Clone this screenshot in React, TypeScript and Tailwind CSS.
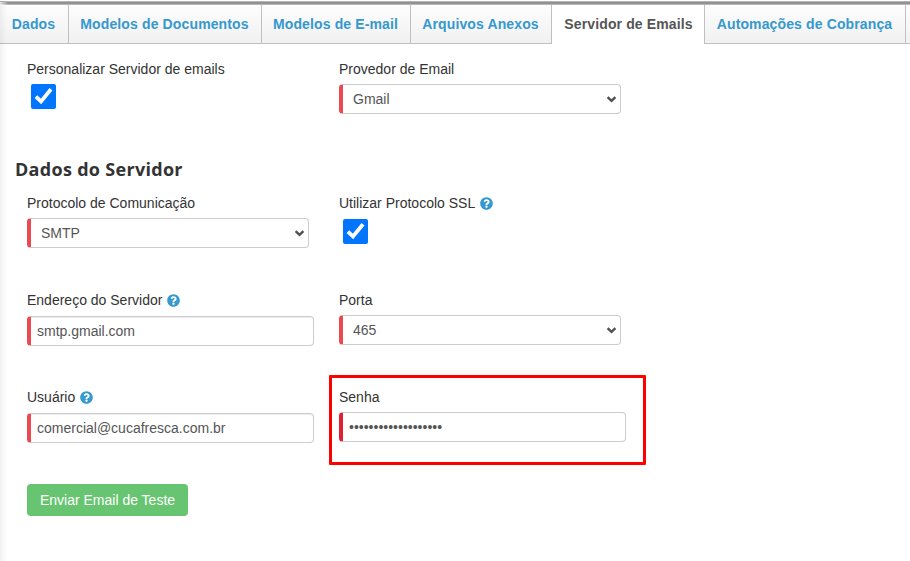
import type { ReactNode } from "react"
import clsx from "clsx"
import { FaQuestionCircle } from "react-icons/fa"

/* ===== Constants ===== */
const tabs = [
  { label: "Dados", width: "w-[69px]" },
  { label: "Modelos de Documentos", width: "w-[193px]" },
  { label: "Modelos de E-mail", width: "w-[149px]" },
  { label: "Arquivos Anexos", width: "w-[141px]" },
  { label: "Servidor de Emails", width: "w-[153px]", active: true },
  { label: "Automações de Cobrança", width: "w-[201px]" },
]

const controlClass =
  "block h-[30px] rounded-[4px] border border-l-4 border-[#ccc] bg-white text-sm text-[#555]"

/* ===== Tabs ===== */
function TabBar() {
  return (
    <nav className="flex h-[39px] text-sm font-bold tracking-[0.13px]">
      {tabs.map((tab) => (
        <a
          key={tab.label}
          className={clsx(
            "flex shrink-0 items-center justify-center whitespace-nowrap border-r border-[#c0c0c0]",
            tab.width,
            tab.active
              ? "bg-white pb-px pl-px text-[#555]"
              : "border-b bg-gradient-to-b from-[#fdfdfd] to-[#f1f1f1] pr-px text-[#3598cf]"
          )}
        >
          {tab.label}
        </a>
      ))}
      <div className="grow border-b border-[#c0c0c0] bg-gradient-to-b from-[#fdfdfd] to-[#f1f1f1]" />
    </nav>
  )
}

/* ===== Form pieces ===== */
function Field({
  label,
  help,
  children,
}: {
  label: string
  help?: boolean
  children: ReactNode
}) {
  return (
    <div className="relative">
      <label className="mb-[5px] flex h-5 items-center gap-[5px] whitespace-nowrap text-sm text-[#333]">
        {label}
        {help && <FaQuestionCircle className="mt-px size-[13px] text-[#3598cf]" />}
      </label>
      {children}
    </div>
  )
}

function Select({ value }: { value: string }) {
  return (
    <div className="relative w-[282px]">
      <select
        className={clsx(controlClass, "w-full appearance-none border-l-[#e9494f] px-2.5")}
        defaultValue={value}
      >
        <option>{value}</option>
      </select>
      <svg
        className="pointer-events-none absolute top-3 right-[5px] h-[7px] w-[9px]"
        viewBox="0 0 9 7"
        fill="none"
        stroke="#505050"
        strokeWidth="2.4"
      >
        <path d="M0.6 1.2 4.5 4.9 8.4 1.2" />
      </svg>
    </div>
  )
}

function Checkbox({ className }: { className?: string }) {
  return (
    <div className={clsx("relative ml-1 size-[25px]", className)}>
      <input
        type="checkbox"
        defaultChecked
        className="block size-full appearance-none rounded-[2px] bg-[#0075ff]"
      />
      <svg
        className="pointer-events-none absolute inset-0"
        viewBox="0 0 25 25"
        fill="none"
        stroke="white"
        strokeWidth="3.8"
      >
        <path d="M4.9 12.6 10 17.4 20 5.2" />
      </svg>
    </div>
  )
}

function TextInput({ value }: { value: string }) {
  return (
    <input
      type="text"
      defaultValue={value}
      className={clsx(
        controlClass,
        "mt-1.5 w-[287px] border-l-[#e9494f] px-1.5 shadow-[inset_0_1px_1px_rgba(0,0,0,0.075)]"
      )}
    />
  )
}

/* ===== Main Page ===== */
export default function App() {
  return (
    <div className="relative h-[561px] w-[910px] overflow-hidden bg-white font-['Liberation_Sans',Arial,sans-serif]">
      <div className="mt-px h-1 border-y border-t-[#b4b4b4] border-b-[#b8b8b8] bg-[#919191]" />
      <TabBar />

      <main className="px-[27px] pt-[15px]">
        <div className="grid h-[97px] grid-cols-[312px_312px]">
          <Field label="Personalizar Servidor de emails">
            <Checkbox />
          </Field>
          <Field label="Provedor de Email">
            <Select value="Gmail" />
          </Field>
        </div>

        <h3 className="-ml-3 h-[37px] font-['Open_Sans',sans-serif] text-lg leading-[26px] font-bold tracking-[0.3px] text-[#333]">
          Dados do Servidor
        </h3>

        <div className="grid grid-cols-[312px_312px] auto-rows-[97px]">
          <Field label="Protocolo de Comunicação">
            <Select value="SMTP" />
          </Field>
          <Field label="Utilizar Protocolo SSL" help>
            <Checkbox className="mt-1.5" />
          </Field>
          <Field label="Endereço do Servidor" help>
            <TextInput value="smtp.gmail.com" />
          </Field>
          <Field label="Porta">
            <Select value="465" />
          </Field>
          <Field label="Usuário" help>
            <TextInput value="comercial@cucafresca.com.br" />
          </Field>
          <Field label="Senha">
            <input
              type="password"
              defaultValue="senha-de-aplicativo"
              className={clsx(controlClass, "w-[287px] border-l-[#e01f33] px-1.5")}
            />
            <div className="pointer-events-none absolute -top-3 -left-2.5 h-[90px] w-[317px] rounded-[1px] border-3 border-[#fe0000]" />
          </Field>
        </div>

        <button className="h-8 w-[161px] rounded-[4px] bg-[#67c470] text-sm whitespace-nowrap text-white">
          Enviar Email de Teste
        </button>
      </main>

      {/* Soft shadow along the left edge of the panel */}
      <div className="pointer-events-none absolute inset-y-0 left-0 w-[7px] bg-gradient-to-r from-black/5 to-transparent" />
      <div className="pointer-events-none absolute top-0.5 left-0 h-[3px] w-2 bg-gradient-to-r from-white/80 to-transparent" />
    </div>
  )
}
